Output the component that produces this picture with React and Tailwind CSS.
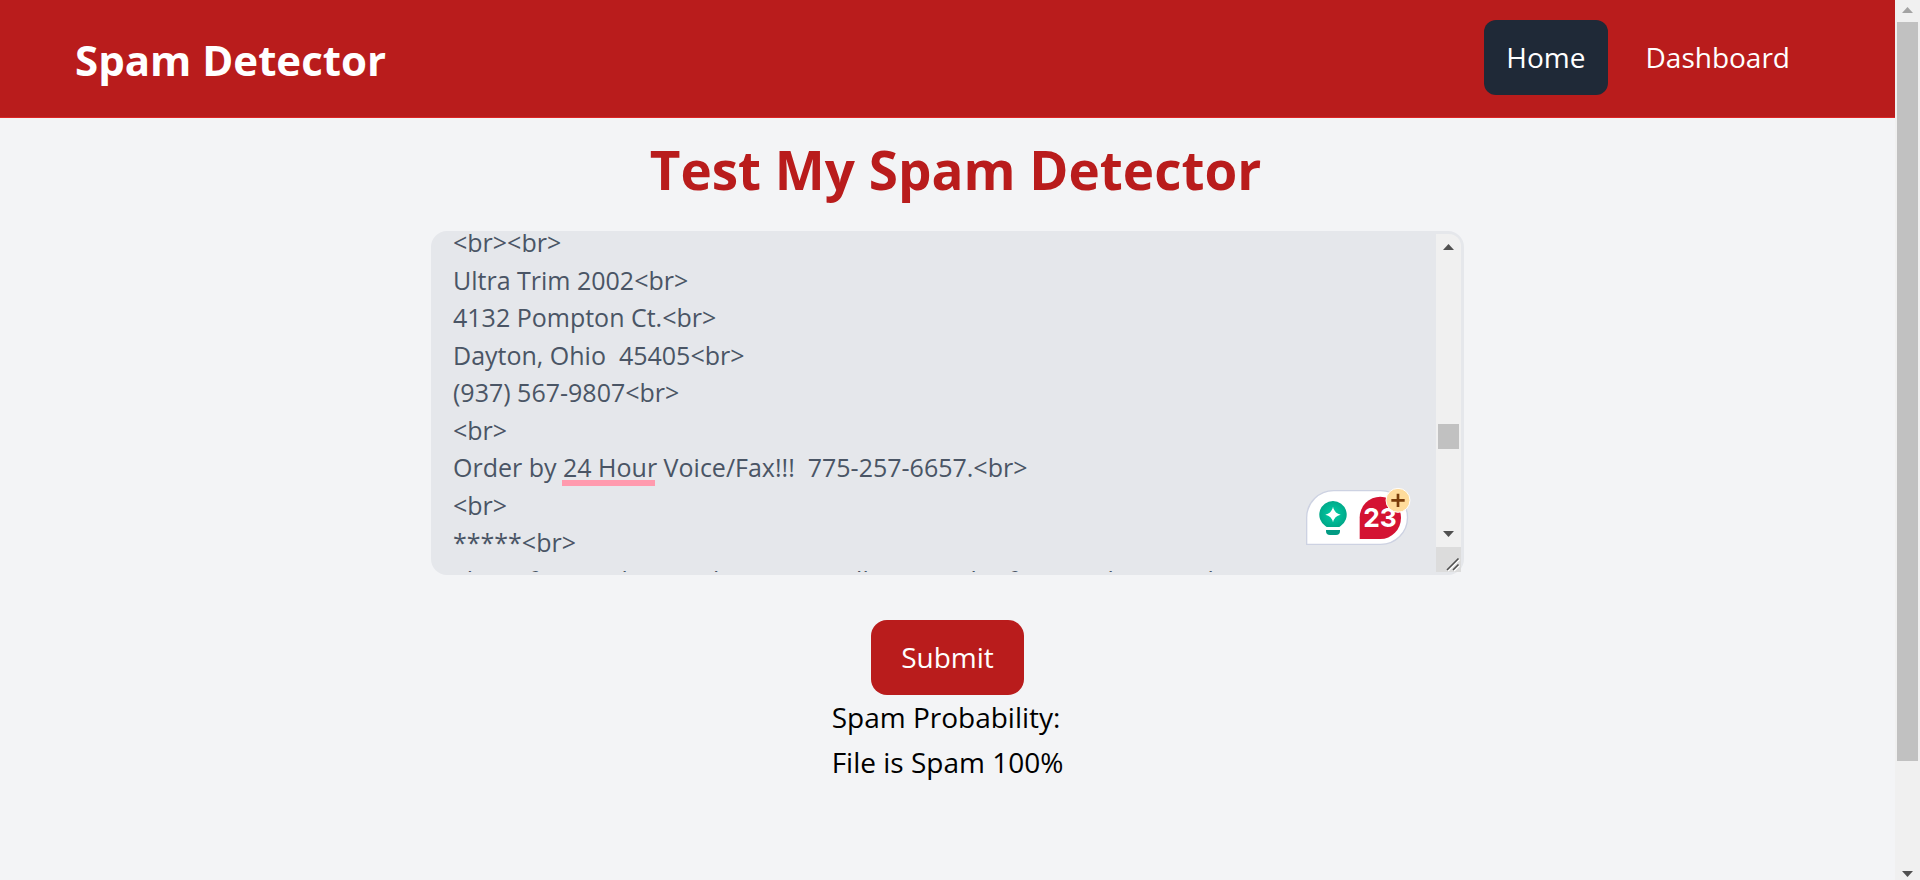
import { useLayoutEffect, useRef } from "react";

const MESSAGE = [
  "<br><br>",
  "Ultra Trim 2002<br>",
  "4132 Pompton Ct.<br>",
  "Dayton, Ohio  45405<br>",
  "(937) 567-9807<br>",
  "<br>",
  "Order by 24 Hour Voice/Fax!!!  775-257-6657.<br>",
  "<br>",
  "*****<br>",
  "The safe new diet you know is small size, and is free, each ounce bag comes in one sized box",
  "<br>",
].join("\n");

function Arrow({ up = false, className = "" }) {
  return (
    <svg viewBox="0 0 11 6" className={`h-[6px] w-[11px] ${className}`} fill="currentColor" aria-hidden="true">
      <path d={up ? "M5.5 0 11 6H0Z" : "M0 0H11L5.5 6Z"} />
    </svg>
  );
}

function PageScrollbar() {
  return (
    <div aria-hidden="true" className="flex w-[25px] shrink-0 flex-col items-center bg-[#f0f0f0] pt-[7px] pb-[3px]">
      <Arrow up className="text-[#a3a3a3]" />
      <div className="mt-[9px] flex w-full flex-1 flex-col px-[2px]">
        <div className="h-[87%] bg-[#c1c1c1]" />
      </div>
      <Arrow className="text-[#505050]" />
    </div>
  );
}

function BoxScrollbar() {
  return (
    <div aria-hidden="true" className="absolute inset-y-[3px] right-[3px] flex w-[25px] flex-col overflow-hidden rounded-tr-xl bg-[#f0f0f0]">
      <div className="flex flex-1 flex-col items-center pt-[10px] pb-[10px]">
        <Arrow up className="text-[#505050]" />
        <div className="flex w-full flex-1 flex-col justify-end px-[2px] pb-[82px]">
          <div className="h-[25px] bg-[#c1c1c1]" />
        </div>
        <Arrow className="text-[#505050]" />
      </div>
      <svg viewBox="0 0 25 25" className="size-[25px] bg-[#dcdcdc]" fill="none">
        <path d="M12 24 23.500 12.500M18 24 23.500 18.500" stroke="#fff" strokeWidth="1.500" />
        <path d="M11 23 22.500 11.500M17 23 22.500 17.500" stroke="#505050" strokeWidth="1.600" />
      </svg>
    </div>
  );
}

function WritingAssistant() {
  return (
    <svg viewBox="0 0 318 180" className="absolute top-[256px] right-[52px] h-[60px] w-[106px]" role="img" aria-label="23 suggestions">
      <defs>
        <radialGradient id="bulb">
          <stop offset="0" stopColor="#00cfa6" />
          <stop offset="1" stopColor="#01a98a" />
        </radialGradient>
      </defs>
      <path d="M2 172V92A81 81 0 0 1 83 11H224A80 80 0 0 1 224 172Z" fill="#fff" stroke="#cdd2e2" strokeWidth="4" />
      <path d="M81 42A41 41 0 0 1 104 117L100 120H62L58 117A41 41 0 0 1 81 42Z" fill="url(#bulb)" />
      <path d="M81 59Q85 79 104 83Q85 87 81 106Q77 87 58 83Q77 79 81 59Z" fill="#fff" />
      <path d="M60 129H102V132Q102 144 90 144H72Q60 144 60 132Z" fill="#019b83" />
      <path d="M161 156V92A62 63 0 0 1 223 29A62 63.500 0 0 1 223 156Z" fill="#d41333" />
      <text x="222" y="120" textAnchor="middle" fontFamily="Inter, sans-serif" fontWeight="700" fontSize="79" fill="#fff">
        23
      </text>
      <circle cx="276" cy="40" r="36" fill="#ffdc9b" stroke="#fff" strokeWidth="3" />
      <path d="M276 20V60M256 40H296" stroke="#7a3d0a" strokeWidth="8" />
    </svg>
  );
}

export default function App() {
  const box = useRef(null);

  useLayoutEffect(() => {
    box.current.scrollTop = 10;
  }, []);

  return (
    <div className="flex min-h-screen bg-gray-100 font-['Open_Sans','Noto_Sans',sans-serif] text-[28px] leading-[45px] text-black">
      <div className="min-w-0 flex-1">
        <header className="flex items-center justify-between border-b border-[#dc2626] bg-[#b91c1c] px-[75px] pt-5 pb-[22px] text-white">
          <span className="pt-[3px] text-[42px] font-bold">Spam Detector</span>
          <nav className="flex gap-4 pr-2">
            <a href="#home" aria-current="page" className="rounded-xl bg-[#1f2937] px-[22px] py-[15px]">
              Home
            </a>
            <a href="#dashboard" className="rounded-xl px-[22px] py-[15px]">
              Dashboard
            </a>
          </nav>
        </header>

        <main className="flex flex-col items-center">
          <h1 className="mt-[22px] pl-4 text-[53px] leading-[60px] font-bold text-[#b91c1c]">
            <label htmlFor="message">Test My Spam Detector</label>
          </h1>

          <form className="mt-[31px] flex w-full flex-col items-center" onSubmit={(e) => e.preventDefault()}>
            <div className="relative w-[1033px] max-w-full">
              <textarea
                id="message"
                ref={box}
                rows={9}
                spellCheck={false}
                defaultValue={MESSAGE}
                className="block w-full resize-none overflow-hidden rounded-2xl border-[3px] border-gray-200 bg-gray-200 pr-11 pl-[19px] text-[25px] leading-normal text-gray-600 outline-none"
              />
              <span aria-hidden="true" className="absolute top-[249px] left-[131px] h-[6px] w-[93px] bg-[#ff9aae]" />
              <BoxScrollbar />
              <WritingAssistant />
            </div>
            <button type="submit" className="mt-[45px] rounded-2xl bg-[#b91c1c] px-[30px] py-[15px] text-white">
              Submit
            </button>
          </form>

          <div role="status">
            <p>Spam Probability:</p>
            <p>File is Spam 100%</p>
          </div>
        </main>
      </div>
      <PageScrollbar />
    </div>
  );
}
